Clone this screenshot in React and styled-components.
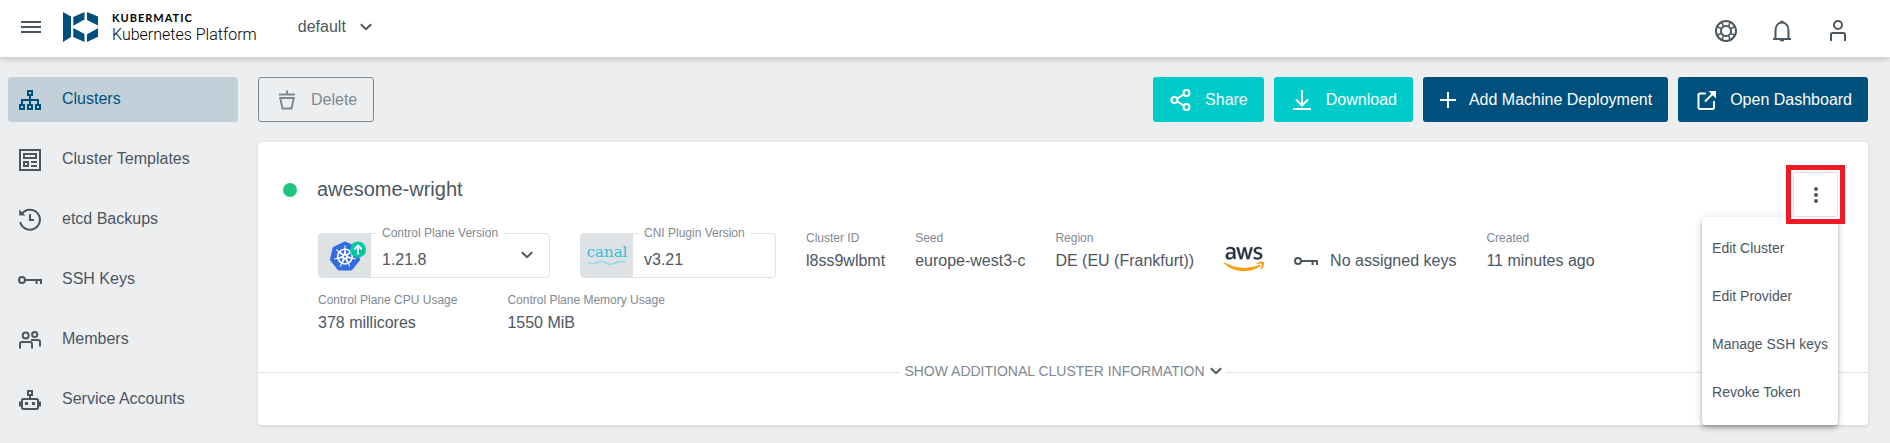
import React from "react";
import styled, { createGlobalStyle, ThemeProvider } from "styled-components";
import { FaAws } from "react-icons/fa";
import { SiKubernetes } from "react-icons/si";

const theme = {
  primary: "#00507d",
  accent: "#00cbcb",
  text: "#4c565f",
  muted: "#808992",
  border: "#dfe2e5",
  page: "#edeef0",
  selected: "#c2d1d9",
  ok: "#1dc780",
};

const GlobalStyle = createGlobalStyle`
  *, *::before, *::after { box-sizing: border-box; }
  body {
    margin: 0;
    background: ${theme.page};
    color: ${theme.text};
    font-family: "Liberation Sans", Arial, sans-serif;
    font-size: 16px;
  }
  button, input, select { font: inherit; color: inherit; }
  svg { display: block; flex: none; }
`;

/* ---------- icons ---------- */

const Stroke = styled.svg.attrs({ fill: "none", stroke: "currentColor", "aria-hidden": true })`
  width: ${(p) => p.$size || 24}px;
  height: ${(p) => p.$size || 24}px;
  stroke-width: 2px;
`;

const Chevron = ({ className }) => (
  <Stroke className={className} $size={12} viewBox="0 0 12 12">
    <path d="M.8 3.200 6 8.200l5.200-5" />
  </Stroke>
);

const MenuIcon = () => (
  <Stroke $size={20} viewBox="0 0 20 20">
    <path d="M0 5h20M0 10h20M0 15h20" />
  </Stroke>
);

const ClustersIcon = () => (
  <Stroke viewBox="0 0 24 24">
    <path d="M10 3h4v4h-4zM2 17h4v4H2zM10 17h4v4h-4zM18 17h4v4h-4zM12 7v10M4 17v-5h16v5" />
  </Stroke>
);

const TemplatesIcon = () => (
  <Stroke viewBox="0 0 24 24">
    <path d="M2 2h20v20H2zM6 6h12v4H6zM6 14h4v4H6zM13 14h6M13 18h6" />
  </Stroke>
);

const BackupsIcon = () => (
  <Stroke viewBox="0 0 24 24">
    <path d="M2.2 14A10 10 0 1 0 4 5.6M12 6v6h4" />
    <path d="M1.2 1.4v6.2h6.2z" fill="currentColor" stroke="none" />
  </Stroke>
);

const KeyIcon = () => (
  <Stroke viewBox="0 0 24 24">
    <circle cx="4" cy="12" r="3" />
    <path d="M7 12h16v4M18.6 12v4" />
  </Stroke>
);

const MembersIcon = () => (
  <Stroke viewBox="0 0 24 24">
    <circle cx="7.7" cy="7.6" r="3" />
    <circle cx="16.7" cy="6.5" r="2.6" />
    <path d="M2 20.5V16q0-2 2-2h8q2 0 2 2v4.500M13 12h7q2 0 2 2v4.500" />
  </Stroke>
);

const RobotIcon = () => (
  <Stroke viewBox="0 0 24 24">
    <path d="M10 3h4v4h-4zM12 7v4M5 11h14l1 1v8l-1 1H5l-1-1v-8zM2 13.500v5M22 13.500v5" />
    <path d="M7 14h3v3H7zM14 14h3v3h-3z" fill="currentColor" stroke="none" />
  </Stroke>
);

const TrashIcon = () => (
  <Stroke viewBox="0 0 24 24">
    <path d="M4 6.500h16M12 2.500v4M5.200 10h13.600l-2.300 10.500H7.500z" />
  </Stroke>
);

const ShareIcon = () => (
  <Stroke viewBox="0 0 24 24">
    <circle cx="5.500" cy="12" r="3" />
    <circle cx="17.500" cy="5" r="3" />
    <circle cx="17.500" cy="19" r="3" />
    <path d="M8 10.500 15 6.500M8 13.500 15 17.500" />
  </Stroke>
);

const DownloadIcon = () => (
  <Stroke viewBox="0 0 24 24">
    <path d="M12 2v15M6 11.500l6 6 6-6M3 21h18" />
  </Stroke>
);

const PlusIcon = () => (
  <Stroke $size={18} viewBox="0 0 18 18">
    <path d="M9 1v16M1 9h16" />
  </Stroke>
);

const OpenIcon = () => (
  <Stroke viewBox="0 0 24 24">
    <path d="M12 5.500H5.500L4.500 6.500V20l1 1H19l1-1v-7M11 13.500l9-9" />
    <path d="M14.500 3H22v7.500z" fill="currentColor" stroke="none" />
  </Stroke>
);

const SupportIcon = () => (
  <Stroke viewBox="0 0 24 24">
    <circle cx="12" cy="12" r="10" />
    <circle cx="12" cy="12" r="5" />
    <path
      strokeWidth="1.5"
      d="M8 3.500l1.500 4M3.500 8l4 1.500M16 3.500l-1.500 4M20.500 8l-4 1.500M8 20.500l1.500-4M3.500 16l4-1.500M16 20.500l-1.500-4M20.500 16l-4-1.500"
    />
  </Stroke>
);

const BellIcon = () => (
  <Stroke viewBox="0 0 24 24">
    <path d="M3 20h18M5.500 20V12c0-5 2.500-8.500 6.500-8.500s6.500 3.500 6.500 8.500v8" />
    <path d="M9.500 20h5a2.500 2.500 0 0 1-5 0zM10.500 1.800h3V4h-3z" fill="currentColor" stroke="none" />
  </Stroke>
);

const UserIcon = () => (
  <Stroke viewBox="0 0 24 24">
    <circle cx="12" cy="6" r="4" />
    <path d="M5 22v-6.500q0-1.500 1.500-1.500h11q1.500 0 1.500 1.500V22" />
  </Stroke>
);

const DotsIcon = () => (
  <Stroke viewBox="0 0 24 24">
    <g fill="currentColor" stroke="none">
      <circle cx="12" cy="6" r="2" />
      <circle cx="12" cy="12" r="2" />
      <circle cx="12" cy="18" r="2" />
    </g>
  </Stroke>
);

const BrandMark = () => (
  <svg width="35" height="30" viewBox="0 0 35 30" fill={theme.primary} aria-hidden="true">
    <path d="M0 0l8 4.500v20.500L0 30zM10.300 5l11.200-5v7.600L10.300 13.800zM24 0l11 4.500v9L24 8zM10.300 16l11.200 6v8l-11.200-5zM24 22.200l11-5.900v8.500L24 30z" />
  </svg>
);

const KubernetesBadge = () => (
  <svg width="42" height="30" viewBox="0 0 42 30" aria-hidden="true">
    <g transform="translate(6 0)">
      <circle cx="15" cy="15" r="11" fill="#fff" />
      <SiKubernetes size={30} color="#326ce5" />
      <circle cx="28" cy="8.500" r="8" fill="#00c9a2" />
      <path d="M28 13.500V4.800M24.300 8.300 28 4.600l3.700 3.700" fill="none" stroke="#fff" strokeWidth="2" />
    </g>
  </svg>
);

const CanalWave = () => (
  <svg width="39" height="6" viewBox="0 0 39 6" fill="none" stroke="#8fd8e4" strokeWidth="1.500" aria-hidden="true">
    <path d="M0 2q4.500 3 9 .5t9 .3 9 .2 11-1" />
  </svg>
);

const AwsMark = styled(FaAws)`
  width: 40px;
  height: 32px;
  margin-bottom: 4px;
  path {
    fill: url(#aws-colors);
    stroke: url(#aws-colors);
    stroke-width: 5px;
  }
`;

const GradientDefs = styled.svg`
  position: absolute;
`;

const AwsLogo = () => (
  <>
    <GradientDefs width="0" height="0" aria-hidden="true">
      <defs>
        <linearGradient id="aws-colors" x1="0" y1="0" x2="0" y2="1">
          <stop offset="0.61" stopColor="#252f3e" />
          <stop offset="0.61" stopColor="#ff9900" />
        </linearGradient>
      </defs>
    </GradientDefs>
    <AwsMark aria-label="AWS" />
  </>
);

/* ---------- header ---------- */

const Header = styled.header`
  position: relative;
  display: flex;
  align-items: flex-start;
  justify-content: space-between;
  height: 57px;
  padding: 0 40px 0 21px;
  background: #fff;
  box-shadow: 0 2px 6px rgba(0, 0, 0, 0.2);
`;

const HeaderStart = styled.div`
  display: flex;
  align-items: center;
  height: 54px;
`;

const HeaderEnd = styled.div`
  display: flex;
  align-items: center;
  gap: 32px;
  padding-top: 19px;
`;

const IconButton = styled.button`
  display: flex;
  padding: 0;
  border: 0;
  background: none;
  cursor: pointer;
`;

const Brand = styled.a`
  display: flex;
  align-items: center;
  gap: 14px;
  margin-left: 22px;
  color: #000;
  text-decoration: none;
`;

const BrandText = styled.span`
  display: flex;
  flex-direction: column;
  padding-top: 2px;
`;

const BrandName = styled.span`
  font: 700 11px/14px Lato, sans-serif;
  letter-spacing: 1px;
`;

const ProductName = styled.span`
  font: 300 16px/20px Roboto, sans-serif;
`;

const ProjectPicker = styled.label`
  display: flex;
  align-items: center;
  margin-left: 41px;
`;

const PlainSelect = styled.select`
  appearance: none;
  padding: 0;
  border: 0;
  background: none;
  line-height: 20px;
  outline: none;
`;

const ProjectChevron = styled(Chevron)`
  margin-left: 13px;
`;

/* ---------- page frame ---------- */

const Frame = styled.div`
  display: flex;
  gap: 20px;
  padding: 20px 22px 18px 8px;
`;

const Sidebar = styled.nav`
  display: flex;
  flex: none;
  flex-direction: column;
  gap: 15px;
  width: 230px;
`;

const NavLink = styled.a`
  display: flex;
  align-items: center;
  gap: 20px;
  height: 45px;
  padding-left: 10px;
  border-radius: 3px;
  background: ${(p) => (p.$active ? p.theme.selected : "transparent")};
  color: ${(p) => (p.$active ? p.theme.primary : p.theme.text)};
  text-decoration: none;
`;

const NavText = styled.span`
  padding-bottom: 2px;
`;

const Main = styled.main`
  display: flex;
  flex: 1;
  flex-direction: column;
  gap: 20px;
  min-width: 0;
`;

const Toolbar = styled.div`
  display: flex;
  gap: 10px;
`;

const variants = {
  outline: { bg: "transparent", fg: theme.muted, line: `1px solid ${theme.muted}` },
  accent: { bg: theme.accent, fg: "#fff", line: "0" },
  primary: { bg: theme.primary, fg: "#fff", line: "0" },
};

const ActionButton = styled.button`
  display: flex;
  align-items: center;
  gap: 12px;
  height: 45px;
  padding: 0 16px;
  border: ${(p) => variants[p.$variant].line};
  border-radius: 3px;
  background: ${(p) => variants[p.$variant].bg};
  color: ${(p) => variants[p.$variant].fg};
  white-space: nowrap;
  cursor: pointer;
`;

const Spacer = styled.div`
  flex: 1;
`;

/* ---------- cluster card ---------- */

const Card = styled.section`
  padding: 30px 0 43px;
  border-radius: 3px;
  background: #fff;
  box-shadow: 0 1px 4px rgba(0, 0, 0, 0.12);
`;

const CardHeader = styled.div`
  display: flex;
  align-items: flex-start;
  justify-content: space-between;
  padding: 0 30px 0 25px;
`;

const Title = styled.div`
  display: flex;
  align-items: center;
  gap: 20px;
  height: 36px;
`;

const StatusDot = styled.span`
  width: 14px;
  height: 14px;
  border-radius: 50%;
  background: ${(p) => p.theme.ok};
`;

const ClusterName = styled.h1`
  margin: 0;
  padding-bottom: 2px;
  font-size: 20px;
  font-weight: 400;
  line-height: 24px;
`;

const MenuAnchor = styled.div`
  position: relative;
`;

const HighlightFrame = styled.div`
  position: relative;
  z-index: 2;
  outline: 5px solid #ed1c24;
  outline-offset: 2px;
`;

const MoreButton = styled.button`
  display: flex;
  align-items: center;
  justify-content: center;
  width: 45px;
  height: 45px;
  padding: 0;
  border: 1px solid ${(p) => p.theme.border};
  border-radius: 3px;
  background: #fff;
`;

const Menu = styled.div`
  position: absolute;
  z-index: 1;
  top: 100%;
  right: 0;
  padding: 8px 0;
  border-radius: 4px;
  background: #fff;
  box-shadow: 0 2px 4px -1px rgba(0, 0, 0, 0.2), 0 4px 5px rgba(0, 0, 0, 0.14),
    0 1px 10px rgba(0, 0, 0, 0.12);
`;

const MenuItem = styled.button`
  display: block;
  width: 100%;
  height: 48px;
  padding: 0 10px 2px;
  border: 0;
  background: none;
  font-size: 14px;
  text-align: left;
  white-space: nowrap;
`;

const Details = styled.div`
  display: flex;
  flex-direction: column;
  gap: 14px;
  padding: 13px 60px 0;
`;

const DetailRow = styled.div`
  display: flex;
  align-items: flex-start;
  gap: ${(p) => p.$gap}px;
`;

const Field = styled.div`
  position: relative;
  display: flex;
  width: ${(p) => p.$width}px;
  height: 45px;
  margin-top: 3px;
  border: 1px solid ${(p) => p.theme.border};
  border-radius: 4px;
`;

const FieldLogo = styled.div`
  display: flex;
  flex: none;
  flex-direction: column;
  align-items: center;
  justify-content: center;
  width: 52px;
  background: ${(p) => p.theme.border};
`;

const FieldLabel = styled.label`
  position: absolute;
  top: -9px;
  left: 57px;
  padding: 0 6px;
  background: #fff;
  color: ${(p) => p.theme.muted};
  font-size: 12px;
  line-height: 16px;
  white-space: nowrap;
`;

const FieldSelect = styled(PlainSelect)`
  flex: 1;
  min-width: 0;
  padding: 8px 0 0 11px;
`;

const FieldInput = styled.input`
  flex: 1;
  min-width: 0;
  padding: 8px 0 0 11px;
  border: 0;
  background: none;
  outline: none;
`;

const FieldChevron = styled(Chevron)`
  align-self: center;
  margin: 0 16px 2px 0;
`;

const CanalText = styled.span`
  padding-bottom: 1px;
  color: #2fc0d6;
  font: 15px/14px "DejaVu Serif", serif;
`;

const Property = styled.div`
  display: flex;
  flex-direction: column;
  gap: 3px;
  white-space: nowrap;
`;

const PropertyLabel = styled.span`
  color: ${(p) => p.theme.muted};
  font-size: 12px;
  line-height: 16px;
`;

const PropertyValue = styled.span`
  line-height: 24px;
`;

const Inline = styled.div`
  display: flex;
  align-items: center;
  gap: 12px;
  height: 62px;
  margin-bottom: -14px;
  white-space: nowrap;
`;

const Divider = styled.div`
  display: flex;
  align-items: center;
  margin-top: 27px;
  &::before, &::after {
    content: "";
    flex: 1;
    border-top: 1px solid ${(p) => p.theme.border};
  }
`;

const ExpandButton = styled.button`
  display: flex;
  align-items: center;
  gap: 5px;
  padding: 0 4px 2px;
  border: 0;
  background: none;
  color: ${(p) => p.theme.muted};
  font-size: 14px;
  line-height: 18px;
  svg { color: ${(p) => p.theme.text}; }
`;

const NAV = [
  ["Clusters", ClustersIcon],
  ["Cluster Templates", TemplatesIcon],
  ["etcd Backups", BackupsIcon],
  ["SSH Keys", KeyIcon],
  ["Members", MembersIcon],
  ["Service Accounts", RobotIcon],
];

const ACTIONS = [
  ["Share", "accent", ShareIcon],
  ["Download", "accent", DownloadIcon],
  ["Add Machine Deployment", "primary", PlusIcon],
  ["Open Dashboard", "primary", OpenIcon],
];

const MENU = ["Edit Cluster", "Edit Provider", "Manage SSH keys", "Revoke Token"];

const Info = ({ label, children }) => (
  <Property>
    <PropertyLabel>{label}</PropertyLabel>
    <PropertyValue>{children}</PropertyValue>
  </Property>
);

export default function App() {
  return (
    <ThemeProvider theme={theme}>
      <GlobalStyle />
      <Header>
        <HeaderStart>
          <IconButton aria-label="Toggle navigation"><MenuIcon /></IconButton>
          <Brand href="#">
            <BrandMark />
            <BrandText>
              <BrandName>KUBERMATIC</BrandName>
              <ProductName>Kubernetes Platform</ProductName>
            </BrandText>
          </Brand>
          <ProjectPicker>
            <PlainSelect aria-label="Project"><option>default</option></PlainSelect>
            <ProjectChevron />
          </ProjectPicker>
        </HeaderStart>
        <HeaderEnd>
          <IconButton aria-label="Support"><SupportIcon /></IconButton>
          <IconButton aria-label="Notifications"><BellIcon /></IconButton>
          <IconButton aria-label="Account"><UserIcon /></IconButton>
        </HeaderEnd>
      </Header>
      <Frame>
        <Sidebar>
          {NAV.map(([name, Icon], i) => (
            <NavLink key={name} href="#" $active={i === 0}>
              <Icon />
              <NavText>{name}</NavText>
            </NavLink>
          ))}
        </Sidebar>
        <Main>
          <Toolbar>
            <ActionButton $variant="outline"><TrashIcon />Delete</ActionButton>
            <Spacer />
            {ACTIONS.map(([name, variant, Icon]) => (
              <ActionButton key={name} $variant={variant}><Icon />{name}</ActionButton>
            ))}
          </Toolbar>
          <Card>
            <CardHeader>
              <Title>
                <StatusDot />
                <ClusterName>awesome-wright</ClusterName>
              </Title>
              <MenuAnchor>
                <HighlightFrame>
                  <MoreButton aria-label="More actions"><DotsIcon /></MoreButton>
                </HighlightFrame>
                <Menu>
                  {MENU.map((name) => <MenuItem key={name}>{name}</MenuItem>)}
                </Menu>
              </MenuAnchor>
            </CardHeader>
            <Details>
              <DetailRow $gap={30}>
                <Field $width={232}>
                  <FieldLogo><KubernetesBadge /></FieldLogo>
                  <FieldLabel htmlFor="version">Control Plane Version</FieldLabel>
                  <FieldSelect id="version"><option>1.21.8</option></FieldSelect>
                  <FieldChevron />
                </Field>
                <Field $width={196}>
                  <FieldLogo><CanalText>canal</CanalText><CanalWave /></FieldLogo>
                  <FieldLabel htmlFor="cni">CNI Plugin Version</FieldLabel>
                  <FieldInput id="cni" readOnly value="v3.21" />
                </Field>
                <Info label="Cluster ID">l8ss9wlbmt</Info>
                <Info label="Seed">europe-west3-c</Info>
                <Info label="Region">DE (EU (Frankfurt))</Info>
                <Inline><AwsLogo /></Inline>
                <Inline><KeyIcon />No assigned keys</Inline>
                <Info label="Created">11 minutes ago</Info>
              </DetailRow>
              <DetailRow $gap={50}>
                <Info label="Control Plane CPU Usage">378 millicores</Info>
                <Info label="Control Plane Memory Usage">1550 MiB</Info>
              </DetailRow>
            </Details>
            <Divider>
              <ExpandButton>SHOW ADDITIONAL CLUSTER INFORMATION<Chevron /></ExpandButton>
            </Divider>
          </Card>
        </Main>
      </Frame>
    </ThemeProvider>
  );
}
